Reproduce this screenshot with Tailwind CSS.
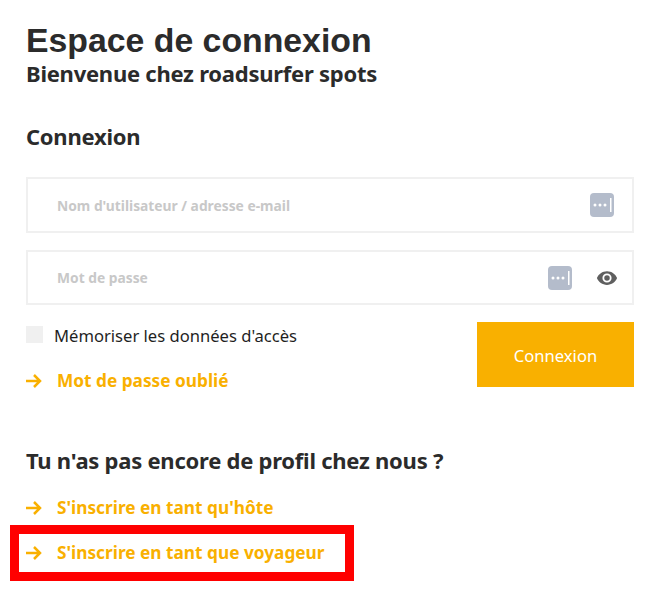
<!DOCTYPE html>
<html lang="fr">
<head>
  <meta charset="UTF-8" />
  <title>Espace de connexion</title>
  <script src="https://cdn.jsdelivr.net/npm/@tailwindcss/browser@4"></script>
</head>
<body class="bg-white font-['Noto_Sans',sans-serif] text-[#2b2b2b]">
  <div class="relative w-[652px] h-[606px] overflow-hidden pl-[26px] pr-[18px] pt-[19px]">
    <h1 class="font-['Liberation_Sans',sans-serif] font-bold text-[33.8px] leading-[42px]">Espace de connexion</h1>
    <h2 class="font-bold text-[22px] tracking-[-0.25px] leading-[26px] -mt-[1px]">Bienvenue chez roadsurfer spots</h2>
    <h3 class="font-bold text-[22px] tracking-[-0.25px] leading-[30px] mt-[35px]">Connexion</h3>

    <!-- Fields -->
    <div class="mt-[26px] h-[56px] border-2 border-[#f0f0f0] flex items-center pl-[29px] pr-[18px]">
      <span class="flex-1 pt-[2px] text-[13.8px] font-bold text-[#c8c8c8]">Nom d'utilisateur / adresse e-mail</span>
      <svg width="24" height="24" viewBox="0 0 24 24"><rect width="24" height="24" rx="4" fill="#b4bccb"/><circle cx="5" cy="12" r="1.5" fill="#fff"/><circle cx="10" cy="12" r="1.5" fill="#fff"/><circle cx="15" cy="12" r="1.5" fill="#fff"/><rect x="20" y="5" width="1.5" height="14" fill="#fff"/></svg>
    </div>
    <div class="mt-[17px] h-[55px] border-2 border-[#f0f0f0] flex items-center pl-[29px] pr-[14px]">
      <span class="flex-1 pt-[2px] text-[13.8px] font-bold text-[#c8c8c8]">Mot de passe</span>
      <svg width="24" height="24" viewBox="0 0 24 24"><rect width="24" height="24" rx="4" fill="#b4bccb"/><circle cx="5" cy="12" r="1.5" fill="#fff"/><circle cx="10" cy="12" r="1.5" fill="#fff"/><circle cx="15" cy="12" r="1.5" fill="#fff"/><rect x="20" y="5" width="1.5" height="14" fill="#fff"/></svg>
      <svg class="ml-[24px]" width="22" height="22" viewBox="0 0 24 24"><path fill="#5f5f5f" d="M12 4.5C7 4.5 2.7 7.6 1 12c1.7 4.4 6 7.5 11 7.5s9.3-3.1 11-7.5c-1.7-4.4-6-7.5-11-7.5zM12 17a5 5 0 1 1 0-10 5 5 0 0 1 0 10zm0-8a3 3 0 1 0 0 6 3 3 0 0 0 0-6z"/></svg>
    </div>

    <!-- Remember + submit -->
    <div class="mt-[17px] flex justify-between items-start">
      <div>
        <label class="flex items-center h-[28px] text-[16.6px] text-[#1f1f1f]">
          <span class="w-[17px] h-[17px] bg-[#f0f0f0] mr-[11px] -mt-[3px]"></span>
          Mémoriser les données d'accès
        </label>
        <a class="flex items-center mt-[19px] text-[17.25px] leading-[24px] font-bold text-[#f9b000]">
          <svg class="mr-[15px]" width="16" height="16" viewBox="0 0 16 16" fill="none" stroke="#f9b000" stroke-width="2.5"><path d="M0 8h14M8 2l6 6-6 6"/></svg>
          Mot de passe oublié
        </a>
      </div>
      <button class="w-[157px] h-[65px] pt-[4px] bg-[#f9b000] text-white text-[16.6px]">Connexion</button>
    </div>

    <h3 class="font-bold text-[22px] tracking-[-0.25px] leading-[30px] mt-[52px]">Tu n'as pas encore de profil chez nous ?</h3>
    <a class="flex items-center mt-[21px] text-[17.25px] leading-[24px] font-bold text-[#f9b000]">
      <svg class="mr-[15px]" width="16" height="16" viewBox="0 0 16 16" fill="none" stroke="#f9b000" stroke-width="2.5"><path d="M0 8h14M8 2l6 6-6 6"/></svg>
      S'inscrire en tant qu'hôte
    </a>
    <a class="flex items-center mt-[21px] text-[17.25px] leading-[24px] font-bold text-[#f9b000]">
      <svg class="mr-[15px]" width="16" height="16" viewBox="0 0 16 16" fill="none" stroke="#f9b000" stroke-width="2.5"><path d="M0 8h14M8 2l6 6-6 6"/></svg>
      S'inscrire en tant que voyageur
    </a>

    <!-- Annotation box -->
    <div class="absolute left-[10px] top-[525px] w-[344px] h-[56px] border-[9px] border-[#ff0000]"></div>
  </div>
</body>
</html>
